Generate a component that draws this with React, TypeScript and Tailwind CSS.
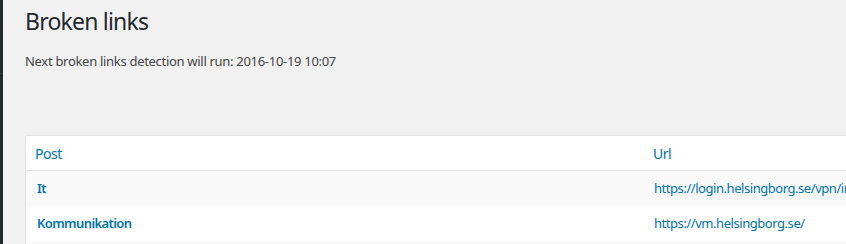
const rows = [
  { post: 'It', url: 'https://login.helsingborg.se/vpn/index.html' },
  { post: 'Kommunikation', url: 'https://vm.helsingborg.se/' },
  { post: 'Kommunikation', url: 'https://helsingborg.se/' },
];

export default function App() {
  return (
    <div
      className="flex h-[244px] w-[846px] overflow-hidden bg-[#f1f1f1]"
      style={{ fontFamily: '"Noto Sans", "Open Sans", sans-serif' }}
    >
      {/* admin menu edge */}
      <div className="flex w-[3px] shrink-0 flex-col bg-[#23282d]">
        <div className="mt-[73px] h-px bg-[#2f353a]" />
      </div>
      <div className="ml-[22px] flex flex-col">
        <h1 className="pt-[6px] text-[23px] font-normal leading-[30px] tracking-[-0.8px] text-[#23282d]">
          Broken links
        </h1>
        <p className="mt-[15px] text-[13px] leading-[20px] tracking-[-0.3px] text-[#444]">
          Next broken links detection will run: 2016-10-19 10:07
        </p>

        <div className="mt-[64px] w-[1200px] border border-[#e5e5e5] bg-white shadow-[0_1px_1px_rgba(0,0,0,0.04)]">
          <div className="grid h-[35px] grid-cols-[617px_1fr] items-center border-b border-[#e1e1e1] text-[14px] tracking-[-0.5px] text-[#0073aa]">
            <span className="pl-[9px]">Post</span>
            <span className="pl-[10px]">Url</span>
          </div>
          {rows.map((row, i) => (
            <div
              key={i}
              className={`grid h-[35px] grid-cols-[617px_1fr] items-center text-[13px] text-[#0073aa] ${
                i % 2 === 0 ? 'bg-[#f9f9f9]' : 'bg-white'
              }`}
            >
              <a className="pl-[11px] font-semibold tracking-[-0.6px]">{row.post}</a>
              <a className="pl-[11px] tracking-[-0.45px]">{row.url}</a>
            </div>
          ))}
        </div>
      </div>
    </div>
  );
}
